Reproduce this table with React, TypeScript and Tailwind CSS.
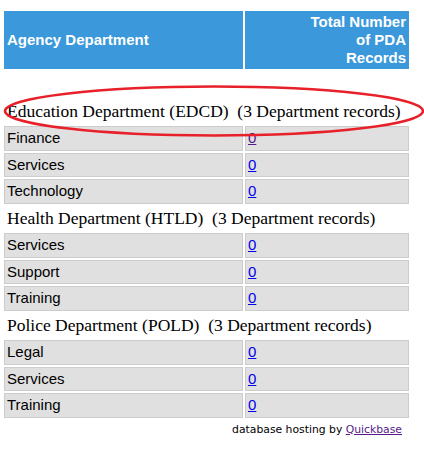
const groups = [
  {
    name: 'Education Department (EDCD)',
    rows: [
      { label: 'Finance', visited: true },
      { label: 'Services' },
      { label: 'Technology' },
    ],
  },
  {
    name: 'Health Department (HTLD)',
    rows: [{ label: 'Services' }, { label: 'Support' }, { label: 'Training' }],
  },
  {
    name: 'Police Department (POLD)',
    rows: [{ label: 'Legal' }, { label: 'Services' }, { label: 'Training' }],
  },
]

const cellClass =
  'flex items-center border border-[#cccccc] bg-[#e0e0e0] pl-[2px] text-[15px] text-black'

const DataRow = ({ label, visited }: { label: string; visited?: boolean }): JSX.Element => (
  <div className="grid h-[24.5px] grid-cols-[239px_164px] gap-x-[2px]">
    <div className={cellClass}>{label}</div>
    <div className={cellClass}>
      <a href="#" className={visited ? 'text-[#551a8b] underline' : 'text-[#0000ee] underline'}>
        0
      </a>
    </div>
  </div>
)

export default function App(): JSX.Element {
  return (
    <div className="relative h-[459px] w-[424px] overflow-hidden bg-white font-['Liberation_Sans',Arial,sans-serif]">
      <div className="flex flex-col gap-[2px] pl-[4px] pt-[11px]">
        {/* header */}
        <div className="grid h-[58px] grid-cols-[239px_164px] gap-x-[2px] text-[15px] font-bold text-white">
          <div className="flex items-center bg-[#3a98db] pl-[3px]">Agency Department</div>
          <div className="bg-[#3a98db] py-[2px] pr-[3px] text-right leading-[18px]">
            Total Number
            <br />
            of PDA
            <br />
            Records
          </div>
        </div>
        <div className="h-[25.5px]" />

        {groups.map((group) => (
          <div key={group.name} className="flex flex-col gap-[2px]">
            <div className="flex h-[25.5px] items-center whitespace-pre pl-[3px] font-['Liberation_Serif','Times_New_Roman',serif] text-[17.5px] text-black">
              {group.name}
              {'  '}(3 Department records)
            </div>
            {group.rows.map((row, i) => (
              <DataRow key={i} label={row.label} visited={row.visited} />
            ))}
          </div>
        ))}

        <div className="w-[405px] pr-[7px] pt-[3px] text-right font-['DejaVu_Sans',Verdana,sans-serif] text-[10.8px] leading-[13px] text-black">
          database hosting by{' '}
          <a href="#" className="text-[#551a8b] underline">
            Quickbase
          </a>
        </div>
      </div>

      {/* hand-drawn annotation */}
      <svg className="pointer-events-none absolute left-0 top-0" width="424" height="459">
        <ellipse cx="214" cy="111" rx="209" ry="24.5" fill="none" stroke="#e8202a" strokeWidth="2.6" />
      </svg>
    </div>
  )
}
